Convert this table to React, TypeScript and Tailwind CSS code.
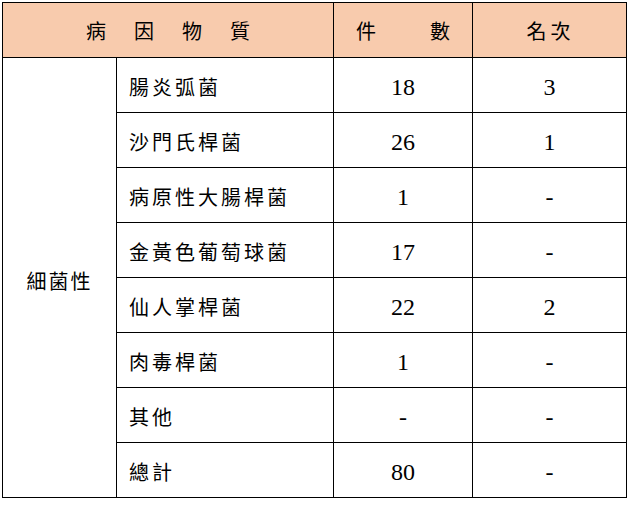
import React from "react";

const rows: [string, string, string][] = [
  ["腸炎弧菌", "18", "3"],
  ["沙門氏桿菌", "26", "1"],
  ["病原性大腸桿菌", "1", "-"],
  ["金黃色葡萄球菌", "17", "-"],
  ["仙人掌桿菌", "22", "2"],
  ["肉毒桿菌", "1", "-"],
  ["其他", "-", "-"],
  ["總計", "80", "-"],
];

const cjk = { fontFamily: '"Noto Sans CJK TC", sans-serif' };

export default function App() {
  return (
    <div className="bg-white w-[629px] h-[505px] pl-[2px] pt-[2px]">
      <table
        className="border-collapse table-fixed w-[624px] text-black"
        style={{ fontFamily: '"Liberation Serif", "Noto Sans CJK TC", serif' }}
      >
        <colgroup>
          <col className="w-[114px]" />
          <col className="w-[217px]" />
          <col className="w-[139px]" />
          <col className="w-[154px]" />
        </colgroup>
        <thead>
          <tr className="h-[55px] bg-[#f8cbad]">
            <th
              colSpan={2}
              className="border border-black p-0 font-normal text-[20px] leading-none text-center whitespace-nowrap tracking-[28px] pl-[28px] pt-[2px]"
              style={cjk}
            >
              病因物質
            </th>
            <th
              className="border border-black p-0 font-normal text-[20px] leading-none pt-[2px]"
              style={cjk}
            >
              <div className="mx-auto w-[94px] flex justify-between whitespace-nowrap">
                <span>件</span>
                <span>數</span>
              </div>
            </th>
            <th
              className="border border-black p-0 font-normal text-[20px] leading-none text-center whitespace-nowrap tracking-[4px] pl-[2px] pt-[2px]"
              style={cjk}
            >
              名次
            </th>
          </tr>
        </thead>
        <tbody>
          {rows.map(([name, count, rank], i) => (
            <tr key={name} className="h-[55px]">
              {i === 0 && (
                <td
                  rowSpan={rows.length}
                  className="border border-black p-0 text-[20px] leading-none text-center align-middle whitespace-nowrap tracking-[2px] pt-[6px]"
                  style={cjk}
                >
                  細菌性
                </td>
              )}
              <td
                className="border border-black p-0 text-[20px] leading-none whitespace-nowrap pl-[12px] tracking-[3px] pt-[4px]"
                style={cjk}
              >
                {name}
              </td>
              <td className="border border-black p-0 text-[24px] leading-none text-center pt-[3px]">
                {count}
              </td>
              <td className="border border-black p-0 text-[24px] leading-none text-center pt-[3px]">
                {rank}
              </td>
            </tr>
          ))}
        </tbody>
      </table>
    </div>
  );
}
